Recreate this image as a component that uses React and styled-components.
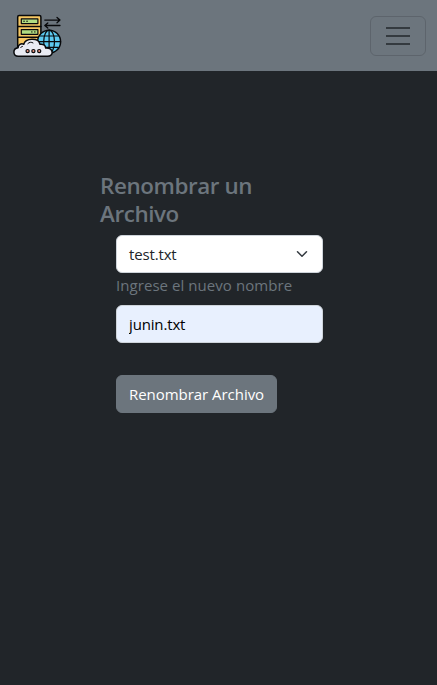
import React from "react";
import styled, { createGlobalStyle } from "styled-components";

const GlobalStyle = createGlobalStyle`
  *, *::before, *::after { box-sizing: border-box; }
  body {
    margin: 0;
    min-height: 100vh;
    background: #212529;
    color: #6c757d;
    font-family: "Open Sans", "Noto Sans", sans-serif;
    font-size: 15px;
    line-height: 24px;
    overflow: hidden;
  }
`;

const Navbar = styled.nav`
  display: flex;
  align-items: center;
  justify-content: space-between;
  height: 71px;
  padding: 0 11px 0 12px;
  background: #6c757d;
`;

const Brand = styled.a`
  display: flex;
  svg { display: block; }
`;

const Toggler = styled.button`
  display: flex;
  align-items: center;
  justify-content: center;
  width: 56px;
  height: 40px;
  padding: 0;
  background: transparent;
  border: 1px solid rgba(33, 37, 41, 0.2);
  border-radius: 6px;
`;

const Main = styled.main`
  width: 239px;
  margin: 101px 0 0 100px;
`;

const Title = styled.h4`
  margin: 0 0 7px;
  font-size: 22.4px;
  font-weight: 600;
  line-height: 28px;
  letter-spacing: -0.4px;
`;

const Form = styled.form`
  display: flex;
  flex-direction: column;
  align-items: flex-start;
  padding: 0 16px;
`;

const Field = styled.div`
  display: flex;
  align-items: center;
  width: 100%;
  height: 38px;
  border: 1px solid #ced4da;
  border-radius: 6px;
  background: ${(p) => p.$background};
  letter-spacing: -0.15px;
`;

const SelectField = styled(Field)`
  justify-content: space-between;
  padding: 0 12px;
  color: #212529;
`;

const Input = styled.input`
  width: 100%;
  padding: 0 12px;
  border: 0;
  outline: 0;
  background: transparent;
  color: #000;
  font: inherit;
  letter-spacing: inherit;
`;

const Label = styled.label`
  margin: 0 0 8px;
  letter-spacing: 0.06px;
  white-space: nowrap;
`;

const Submit = styled.button`
  height: 38px;
  margin-top: 32px;
  padding: 0 12px;
  border: 1px solid #6c757d;
  border-radius: 6px;
  background: #6c757d;
  color: #fff;
  font: inherit;
  letter-spacing: -0.04px;
  white-space: nowrap;
`;

const ServerLogo = () => (
  <svg width="50" height="48" viewBox="12 12 50 48" fill="none" stroke="#08090b" strokeWidth="1.5" strokeLinecap="round" strokeLinejoin="round">
    <path d="M17.7 17q0-1.4 1.4-1.4h20.4q1.4 0 1.4 1.4v36H17.7z" fill="#f7c863" />
    <path d="M17.7 26.5h23.2M17.7 37.3h23.2" />
    <path d="M21.3 18.9h16.6v4.7H21.3zM21.3 29.6h16.6v4.7H21.3z" fill="#b0dc82" strokeWidth="1.2" />
    <path d="M24 21.2h.1M27 21.2h.1M31.8 31.9h.1M34.8 31.9h.1" strokeWidth="1.4" />
    <path d="M44.8 20.1H60m-3-2.6 3 2.6-3 2.6M60 25.5H44.8m3-2.6-3 2.6 3 2.6" strokeWidth="1.3" />
    <circle cx="49.1" cy="41.7" r="11.5" fill="#5dcaf0" />
    <ellipse cx="49.1" cy="41.7" rx="5.4" ry="11.5" strokeWidth="1.2" />
    <path d="M49.1 30.2v23M37.6 41.7h23M40 36h18.2M40 47.4h18.2" strokeWidth="1.2" />
    <path d="M18.2 56.3c-5.4 0-6-7.8-.1-8.5.2-3.2 2.8-4.7 5.7-3.6C25.2 38.2 38.6 37 40 44.3c3.3-.6 5.4 1.1 5.7 3.8 8.3-.2 8.3 8.2 1.8 8.2z" fill="#e9ebf3" />
    <path d="M27.8 43.6c1.5-1.6 3.6-1.8 5.2-.7M20.8 47.6c.2-.8.8-1.2 1.6-1.2" strokeWidth="1" />
    <g fill="#ed947f" strokeWidth="1.2">
      <circle cx="27.6" cy="51.1" r="1.6" />
      <circle cx="33.4" cy="51.1" r="1.6" />
      <circle cx="39.2" cy="51.1" r="1.6" />
    </g>
  </svg>
);

export default function App() {
  return (
    <>
      <GlobalStyle />
      <Navbar>
        <Brand><ServerLogo /></Brand>
        <Toggler aria-label="Toggle navigation">
          <svg width="24" height="18" viewBox="0 0 24 18" stroke="#343a3f" strokeWidth="2">
            <path d="M0 1h24M0 9h24M0 17h24" />
          </svg>
        </Toggler>
      </Navbar>
      <Main>
        <Title>Renombrar un<br />Archivo</Title>
        <Form>
          <SelectField $background="#fff">
            <span>test.txt</span>
            <svg width="16" height="12" viewBox="0 0 16 16" fill="none" stroke="#343a40" strokeWidth="2" strokeLinecap="round" strokeLinejoin="round">
              <path d="m2 5 6 6 6-6" />
            </svg>
          </SelectField>
          <Label htmlFor="name">Ingrese el nuevo nombre</Label>
          <Field $background="#e8f0fe"><Input id="name" defaultValue="junin.txt" /></Field>
          <Submit type="button">Renombrar Archivo</Submit>
        </Form>
      </Main>
    </>
  );
}
